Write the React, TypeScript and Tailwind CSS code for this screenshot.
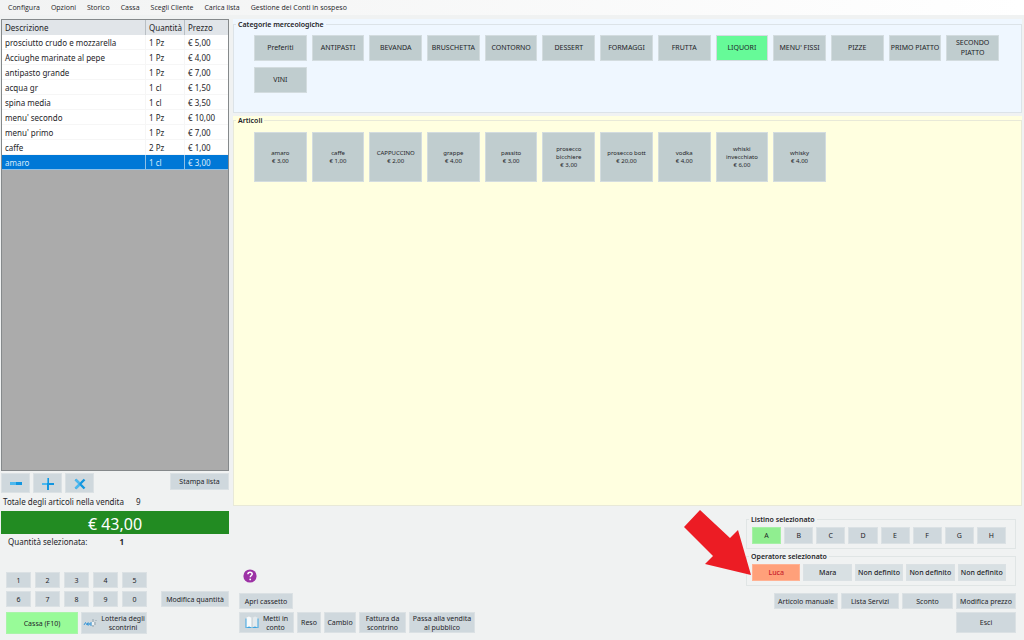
import { useState } from "react";
import type { ReactNode } from "react";
import clsx from "clsx";
import { twMerge } from "tailwind-merge";

interface SaleLine {
  description: string;
  quantity: string;
  price: string;
}

interface Article {
  name: string;
  price: string;
}

const MENU = [
  "Configura",
  "Opzioni",
  "Storico",
  "Cassa",
  "Scegli Cliente",
  "Carica lista",
  "Gestione dei Conti in sospeso",
];

const LINES: SaleLine[] = [
  { description: "prosciutto crudo e mozzarella", quantity: "1 Pz", price: "€ 5,00" },
  { description: "Acciughe marinate al pepe", quantity: "1 Pz", price: "€ 4,00" },
  { description: "antipasto grande", quantity: "1 Pz", price: "€ 7,00" },
  { description: "acqua gr", quantity: "1 cl", price: "€ 1,50" },
  { description: "spina media", quantity: "1 cl", price: "€ 3,50" },
  { description: "menu' secondo", quantity: "1 Pz", price: "€ 10,00" },
  { description: "menu' primo", quantity: "1 Pz", price: "€ 7,00" },
  { description: "caffe", quantity: "2 Pz", price: "€ 1,00" },
  { description: "amaro", quantity: "1 cl", price: "€ 3,00" },
];

const CATEGORIES = [
  "Preferiti",
  "ANTIPASTI",
  "BEVANDA",
  "BRUSCHETTA",
  "CONTORNO",
  "DESSERT",
  "FORMAGGI",
  "FRUTTA",
  "LIQUORI",
  "MENU' FISSI",
  "PIZZE",
  "PRIMO PIATTO",
  "SECONDO PIATTO",
  "VINI",
];

const ARTICLES: Article[] = [
  { name: "amaro", price: "€ 3,00" },
  { name: "caffe", price: "€ 1,00" },
  { name: "CAPPUCCINO", price: "€ 2,00" },
  { name: "grappe", price: "€ 4,00" },
  { name: "passito", price: "€ 3,00" },
  { name: "prosecco bicchiere", price: "€ 3,00" },
  { name: "prosecco bott", price: "€ 20,00" },
  { name: "vodka", price: "€ 4,00" },
  { name: "whiski invecchiato", price: "€ 6,00" },
  { name: "whisky", price: "€ 4,00" },
];

const KEYS = ["1", "2", "3", "4", "5", "6", "7", "8", "9", "0"];
const PRICE_LISTS = ["A", "B", "C", "D", "E", "F", "G", "H"];
const OPERATORS = ["Luca", "Mara", "Non definito", "Non definito", "Non definito"];

interface ToolButtonProps {
  children: ReactNode;
  className?: string;
  label?: string;
  onClick?: () => void;
}

function ToolButton({ children, className, label, onClick }: ToolButtonProps) {
  return (
    <button
      type="button"
      aria-label={label}
      onClick={onClick}
      className={twMerge(
        "flex shrink-0 items-center justify-center border border-[#dbe1e4] bg-[#cfd8dd] text-center leading-[9px]",
        className
      )}
    >
      {children}
    </button>
  );
}

function MinusIcon() {
  return (
    <svg viewBox="0 0 14 14" className="size-[14px]">
      <path d="M1 6h6v3H1z" fill="#4db8ee" />
      <path d="M7 6h6v3H7z" fill="#1296e0" />
    </svg>
  );
}

function PlusIcon() {
  return (
    <svg viewBox="0 0 14 14" className="size-[14px]">
      <path d="M6 2h2v12H6zM7 7h6v2H7z" fill="#1296e0" />
      <path d="M1 7h5v2H1zM6 2h1v5H6z" fill="#4db8ee" />
    </svg>
  );
}

function CrossIcon() {
  return (
    <svg viewBox="0 0 14 14" className="size-[14px]" fill="none" strokeWidth="2.4">
      <path d="M2.500 3.500l9 9M11.500 3.500l-9 9" stroke="#1296e0" />
      <path d="M2.500 3.500l4 4M2.500 12.500l4-4" stroke="#4db8ee" />
    </svg>
  );
}

function BookIcon() {
  return (
    <svg viewBox="0 0 14 13" className="h-[13px] w-[14px] shrink-0">
      <path d="M.5 2.500v9.500h13V2.500" fill="#3da4e0" />
      <path d="M1.500 1.500L4 .5l3 1.500v9.500l-3-1-2.500 1z" fill="#f7fafb" />
      <path d="M12.500 1.500L10 .5 7 2v9.500l3-1 2.500 1z" fill="#e4eaed" />
      <path d="M7 2v9.500" stroke="#b5c2c9" strokeWidth=".8" />
    </svg>
  );
}

function LotteryIcon() {
  return (
    <svg viewBox="0 0 14 10" className="h-[10px] w-[14px] shrink-0" fill="none">
      <path d="M1 7l1.500-2.500L4 7M4.500 5H6v2H4.500zM9 5H7v2h2" stroke="#3c98d8" />
      <path d="M9 3h2M9 8h2M12 4v3M10 1v1M13 2v1" stroke="#93a3ad" />
      <path d="M9 4h2v3H9z" fill="#eef2f4" />
    </svg>
  );
}

function PointerArrow() {
  return (
    <svg
      viewBox="0 0 68 66"
      aria-hidden="true"
      className="pointer-events-none absolute -left-[62px] top-1 h-[66px] w-[68px]"
    >
      <path d="M0 17L16 0l30 28 8-8 13 45-46-11 8-8z" fill="#ec1c24" />
    </svg>
  );
}

function SaleTable() {
  const [selected, setSelected] = useState(8);
  return (
    <div className="flex-1 border border-[#85898b] bg-[#ababab]">
      <table className="w-full table-fixed border-separate border-spacing-0 text-left text-[8px] leading-[12px]">
        <colgroup>
          <col />
          <col className="w-[39px]" />
          <col className="w-[43px]" />
        </colgroup>
        <thead>
          <tr className="h-[15px] bg-[#e1e5e9]">
            <th className="border-r border-[#b9bfc4] px-[3px] py-0 font-normal">Descrizione</th>
            <th className="border-r border-[#b9bfc4] px-[3px] py-0 font-normal">Quantità</th>
            <th className="px-[3px] py-0 font-normal">Prezzo</th>
          </tr>
        </thead>
        <tbody>
          {LINES.map((line, i) => (
            <tr
              key={line.description}
              onClick={() => setSelected(i)}
              className={clsx(
                "h-[15px]",
                i === selected ? "bg-[#0078d7] text-[#d9ecfb]" : "bg-white"
              )}
            >
              <td className="border-b border-r border-[#f0f0f0]/60 px-[3px] pb-0 pt-[2px]">{line.description}</td>
              <td className="border-b border-r border-[#f0f0f0]/60 px-[3px] pb-0 pt-[2px]">{line.quantity}</td>
              <td className="border-b border-[#f0f0f0]/60 px-[3px] pb-0 pt-[2px]">{line.price}</td>
            </tr>
          ))}
        </tbody>
      </table>
    </div>
  );
}

function SalePanel() {
  const [quantity, setQuantity] = useState("1");
  return (
    <aside className="flex w-[229px] shrink-0 flex-col pb-[6px] pl-px">
      <SaleTable />

      <div className="mt-[2px] flex items-start gap-[3px]">
        <ToolButton label="Togli" className="h-5 w-[29px]">
          <MinusIcon />
        </ToolButton>
        <ToolButton label="Aggiungi" className="h-5 w-[29px]">
          <PlusIcon />
        </ToolButton>
        <ToolButton label="Elimina" className="h-5 w-[29px]">
          <CrossIcon />
        </ToolButton>
        <ToolButton className="ml-auto h-[17px] w-[59px]">Stampa lista</ToolButton>
      </div>

      <p className="mt-[3px] flex gap-3 pl-[2px] text-[8px] leading-[12px]">
        <span>Totale degli articoli nella vendita</span>
        <span>9</span>
      </p>
      <p className="mt-[3px] h-[23px] bg-[#228b22] text-center text-base leading-[26px] text-white">
        € 43,00
      </p>
      <p className="mt-[2px] flex gap-8 pl-[7px] text-[8px] leading-[12px]">
        <span>Quantità selezionata:</span>
        <b>{quantity}</b>
      </p>

      <div className="mt-6 flex items-end justify-between pl-[5px]">
        <div className="grid grid-cols-5 gap-x-[4px] gap-y-[3px]">
          {KEYS.map((k) => (
            <ToolButton key={k} className="h-4 w-[25px]" onClick={() => setQuantity(k)}>
              {k}
            </ToolButton>
          ))}
        </div>
        <ToolButton className="h-4 w-[68px]">Modifica quantità</ToolButton>
      </div>
      <div className="mt-[5px] flex gap-[3px] pl-[5px]">
        <ToolButton className="h-[22px] w-[72px] border-[#a8f5a8] bg-[#98fb98]">Cassa (F10)</ToolButton>
        <ToolButton className="h-[22px] w-[66px] gap-1">
          <LotteryIcon />
          <span>
            Lotteria degli
            <br />
            scontrini
          </span>
        </ToolButton>
      </div>
    </aside>
  );
}

function Categories() {
  const [selected, setSelected] = useState("LIQUORI");
  return (
    <div className="bg-[#eff7ff]">
      <fieldset className="h-[94px] border border-[#dce3e8]">
        <legend className="ml-[2px] px-[2px] font-semibold leading-[11px]">Categorie merceologiche</legend>
        <div className="grid grid-cols-13 gap-x-[5px] gap-y-[6px] pl-5 pr-[22px] pt-[5px]">
          {CATEGORIES.map((c) => (
            <button
              key={c}
              type="button"
              onClick={() => setSelected(c)}
              className={clsx(
                "h-[26px] border border-[#d3dcdf] leading-[10px]",
                c === selected ? "bg-[#66fa98]" : "bg-[#c0cdcf]"
              )}
            >
              {c}
            </button>
          ))}
        </div>
      </fieldset>
    </div>
  );
}

function Articles() {
  return (
    <div className="mt-[3px] flex flex-1 flex-col bg-[#ffffe0]">
      <fieldset className="flex-1 border border-[#e8e9d8]">
        <legend className="ml-[2px] px-[2px] font-semibold leading-[9px]">Articoli</legend>
        <div className="grid grid-cols-13 gap-x-[5px] gap-y-[6px] pl-5 pr-[22px] pt-[7px]">
          {ARTICLES.map((a) => (
            <button
              key={a.name}
              type="button"
              className="h-[50px] border border-[#d3dcdf] bg-[#c0cdcf] px-[3px] text-[6px] leading-[8px]"
            >
              {a.name}
              <span className="block">{a.price}</span>
            </button>
          ))}
        </div>
      </fieldset>
    </div>
  );
}

function ReceiptActions() {
  return (
    <div className="flex flex-col items-start pb-[7px]">
      <button type="button" aria-label="Aiuto" className="mb-[10px] ml-1 mt-auto">
        <svg viewBox="0 0 14 14" className="size-[14px]">
          <circle cx="7" cy="7" r="6.600" fill="#9c32a5" />
          <path
            d="M4.900 5.300c0-1.400 1-2.100 2.200-2.100s2.100.8 2.100 1.900c0 1.400-1.900 1.500-1.900 3.100"
            fill="none"
            stroke="#fff"
            strokeWidth="1.500"
          />
          <circle cx="7.200" cy="10.400" r=".9" fill="#fff" />
        </svg>
      </button>
      <ToolButton className="h-4 w-[54px]">Apri cassetto</ToolButton>
      <div className="mt-[3px] flex gap-[3px]">
        <ToolButton className="h-[21px] w-[55px] gap-1">
          <BookIcon />
          <span>
            Metti in
            <br />
            conto
          </span>
        </ToolButton>
        <ToolButton className="h-[21px] w-6">Reso</ToolButton>
        <ToolButton className="h-[21px] w-8">Cambio</ToolButton>
        <ToolButton className="h-[21px] w-[47px]">
          Fattura da
          <br />
          scontrino
        </ToolButton>
        <ToolButton className="h-[21px] w-[66px]">
          Passa alla vendita
          <br />
          al pubblico
        </ToolButton>
      </div>
    </div>
  );
}

function OperatorPanel() {
  const [priceList, setPriceList] = useState(0);
  const [operator, setOperator] = useState(0);
  return (
    <div className="relative flex w-[270px] flex-col pb-[7px] pt-2">
      <fieldset className="h-[35px] border border-[#e0e5e5]">
        <legend className="ml-[2px] px-[2px] font-semibold leading-[11px]">Listino selezionato</legend>
        <div className="grid grid-cols-8 gap-[3px] pl-[5px] pr-[9px] pt-[2px]">
          {PRICE_LISTS.map((p, i) => (
            <ToolButton
              key={p}
              onClick={() => setPriceList(i)}
              className={clsx("h-[17px]", i === priceList && "border-[#a6f0a6] bg-[#90ee90]")}
            >
              {p}
            </ToolButton>
          ))}
        </div>
      </fieldset>
      <fieldset className="mt-[2px] h-[35px] border border-[#e0e5e5]">
        <legend className="ml-[2px] px-[2px] font-semibold leading-[11px]">Operatore selezionato</legend>
        <div className="grid grid-cols-5 gap-[3px] pl-[5px] pr-[9px] pt-[2px]">
          {OPERATORS.map((o, i) => (
            <ToolButton
              key={i}
              onClick={() => setOperator(i)}
              className={clsx(
                "h-[17px] whitespace-nowrap font-medium",
                i === operator ? "border-[#ffb294] bg-[#ffa07a] text-[#c8202c]" : "bg-[#d8e0e3]"
              )}
            >
              {o}
            </ToolButton>
          ))}
        </div>
      </fieldset>
      <div className="mt-auto flex justify-end gap-[3px]">
        <ToolButton className="h-4 w-16">Articolo manuale</ToolButton>
        <ToolButton className="h-4 w-[58px]">Lista Servizi</ToolButton>
        <ToolButton className="h-4 w-[51px]">Sconto</ToolButton>
        <ToolButton className="h-4 w-[60px]">Modifica prezzo</ToolButton>
      </div>
      <ToolButton className="mt-[3px] h-[21px] w-[60px] self-end">Esci</ToolButton>
      <PointerArrow />
    </div>
  );
}

export default function App() {
  return (
    <div className="flex min-h-screen flex-col bg-[#f0f2f2] font-['Noto_Sans','Open_Sans',sans-serif] text-[7px] text-[#1e2428]">
      <nav className="flex h-[15px] items-center gap-[11px] bg-linear-to-r from-[#f2f3f3] to-white pl-2 pt-px font-['Open_Sans','Noto_Sans',sans-serif]">
        {MENU.map((item) => (
          <button key={item} type="button" className="whitespace-nowrap">
            {item}
          </button>
        ))}
      </nav>
      <div className="flex flex-1 pt-1">
        <SalePanel />
        <main className="flex min-w-0 flex-1 flex-col pl-1 pr-[2px]">
          <Categories />
          <Articles />
          <div className="flex h-[134px] justify-between px-[6px]">
            <ReceiptActions />
            <OperatorPanel />
          </div>
        </main>
      </div>
    </div>
  );
}
